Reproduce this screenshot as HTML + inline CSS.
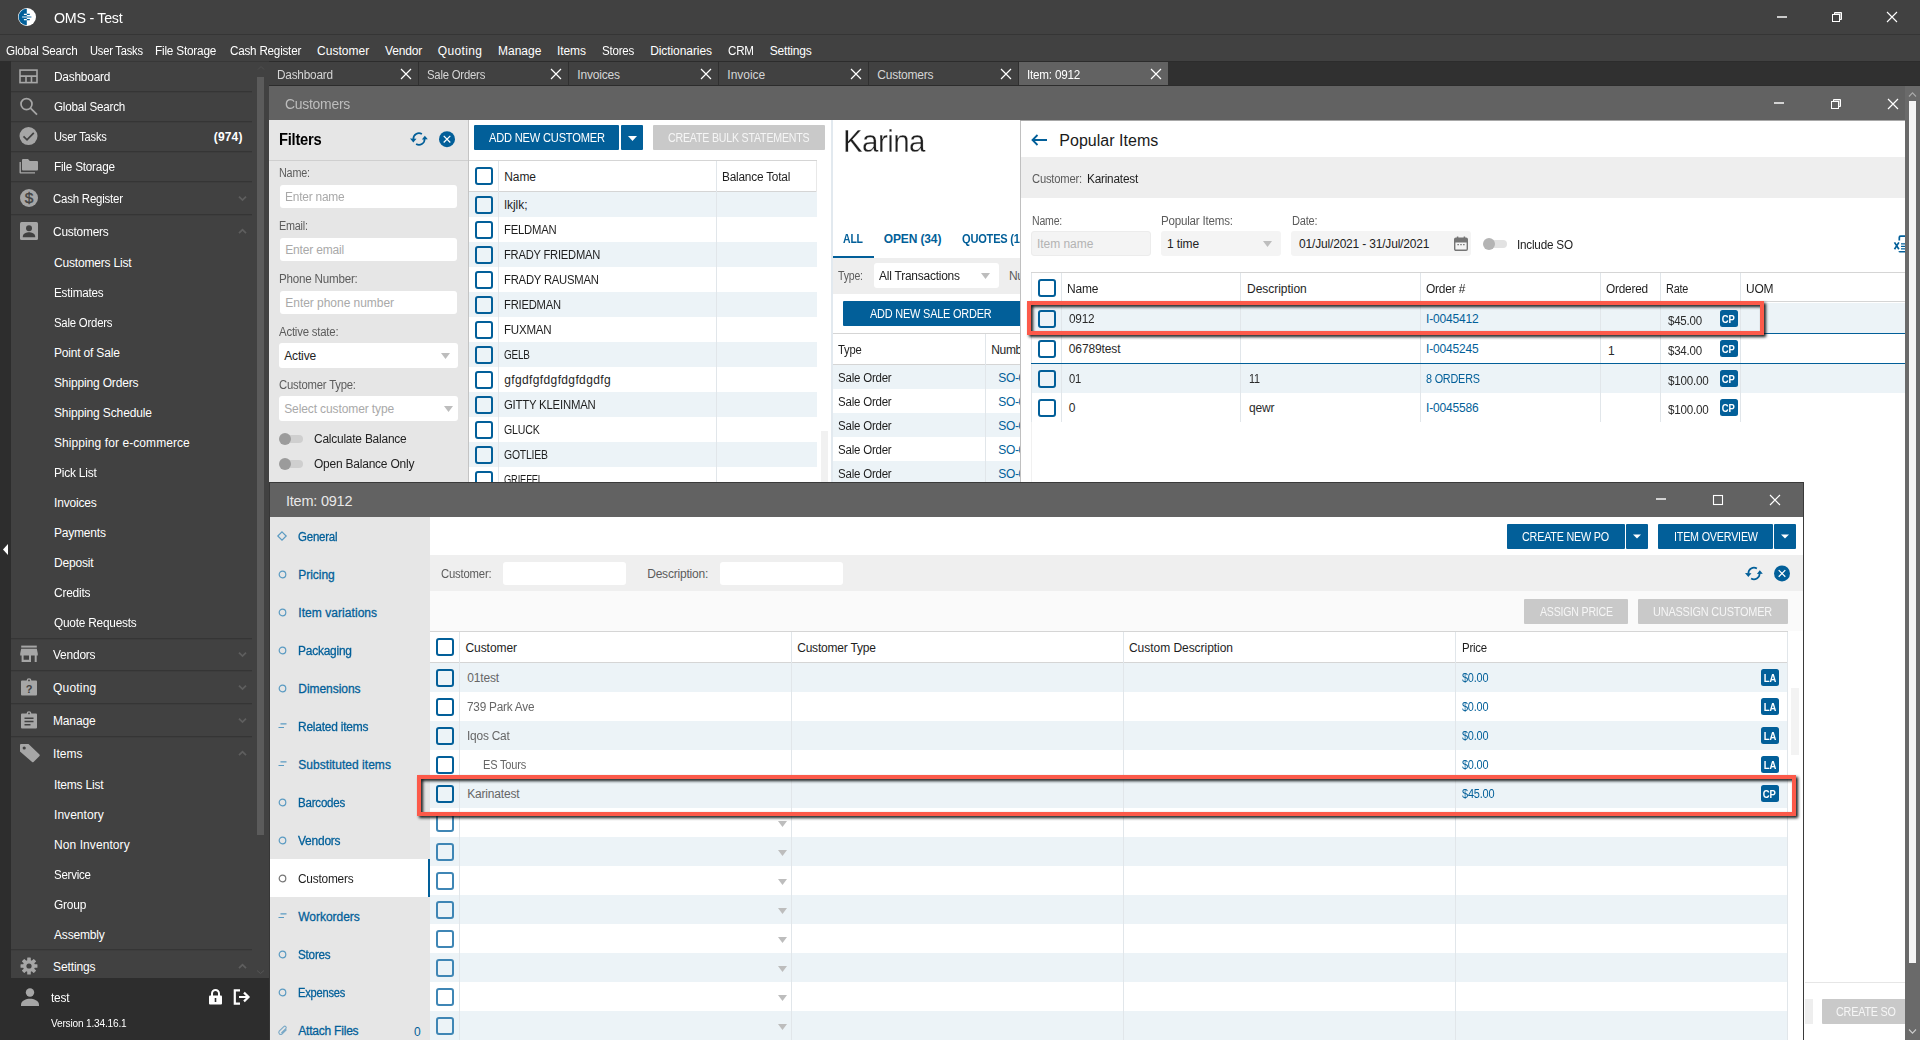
<!DOCTYPE html><html><head><meta charset="utf-8"><title>OMS - Test</title><style>
*{box-sizing:border-box;margin:0;padding:0}
html,body{width:1920px;height:1040px;overflow:hidden;background:#414141}
body{font-family:"Liberation Sans",sans-serif;font-size:12px;color:#fff;position:relative;letter-spacing:-0.35px}
.a{position:absolute}
.t{position:absolute;white-space:nowrap;line-height:16px}
svg{position:absolute;overflow:visible}
.cb{position:absolute;width:18px;height:18px;border:2px solid #025f99;border-radius:3px}
.btn{position:absolute;background:#025f99;border-radius:1px}
.btn.d{background:#c9c9c9}
.inp{position:absolute;background:#fff;border-radius:3px}
.badge{position:absolute;width:17.5px;height:17px;background:#025f99;border-radius:2.5px;color:#fff;font-weight:bold;font-size:10.5px;line-height:18px;text-align:center;letter-spacing:0}
.badge span{display:inline-block;transform:scaleX(.9)}
.red{position:absolute;border:4px solid #fc5a4a;filter:drop-shadow(2px 2px 1.4px rgba(8,14,14,.95))}
</style></head><body>
<div class="a" style="left:0px;top:0px;width:1920px;height:34px;background:#414141;"></div>
<div class="a" style="left:0px;top:34px;width:1920px;height:1px;background:#353535;"></div>
<div class="a" style="left:0px;top:35px;width:1920px;height:26px;background:#414141;"></div>
<svg style="left:17px;top:7px" width="19" height="19" viewBox="0 0 19 19"><g transform="translate(0.5 0.5)"><circle cx="9.5" cy="9.5" r="9" fill="#fff"/><path d="M9.3 1.3A8.2 8.2 0 0 0 9.3 17.7Z" fill="#025f99"/><path d="M9.3 6.9h3M9.3 12.1h3" stroke="#025f99" stroke-width="1.2"/><path d="M9.3 9.5h4.6" stroke="#4a8fbb" stroke-width="1.3"/><path d="M6.4 6.9h2.9M6.4 12.1h2.9" stroke="#fff" stroke-width="1.2"/><path d="M4.6 9.5h4.7" stroke="#bcd6e6" stroke-width="1.3"/></g></svg>
<div class="t" style="left:54px;top:9px;font-size:14.5px;letter-spacing:-0.266px;transform:scaleX(0.9835);transform-origin:0 0;line-height:18px">OMS - Test</div>
<svg style="left:1777px;top:16px" width="10" height="2"><rect width="10" height="2" fill="#fff" fill-opacity="0.72"/></svg>
<svg style="left:1832px;top:12px" width="10" height="10" viewBox="0 0 10 10" fill="none" stroke="#fff" stroke-width="1"><path d="M2.5 2.5V0.5H9.5V7.5H7.5V2.5Z" fill="#a6a6a6"/><rect x="0.5" y="2.5" width="7" height="7"/></svg>
<svg style="left:1887px;top:12px" width="10" height="10" stroke="#fff" stroke-width="1.1"><path d="M0 0L10 10M10 0L0 10"/></svg>
<div class="t" style="left:6px;top:43px;letter-spacing:-0.220px;transform:scaleX(0.9767);transform-origin:0 0;">Global Search</div>
<div class="t" style="left:90px;top:43px;letter-spacing:-0.220px;transform:scaleX(0.9274);transform-origin:0 0;">User Tasks</div>
<div class="t" style="left:155px;top:43px;letter-spacing:-0.220px;transform:scaleX(0.9842);transform-origin:0 0;">File Storage</div>
<div class="t" style="left:230px;top:43px;letter-spacing:-0.220px;transform:scaleX(0.9715);transform-origin:0 0;">Cash Register</div>
<div class="t" style="left:317px;top:43px;letter-spacing:0.041px;">Customer</div>
<div class="t" style="left:385px;top:43px;letter-spacing:-0.147px;">Vendor</div>
<div class="t" style="left:437.7px;top:43px;letter-spacing:0.378px;">Quoting</div>
<div class="t" style="left:498px;top:43px;letter-spacing:-0.013px;">Manage</div>
<div class="t" style="left:557px;top:43px;letter-spacing:-0.085px;">Items</div>
<div class="t" style="left:601.7px;top:43px;letter-spacing:-0.220px;transform:scaleX(0.9618);transform-origin:0 0;">Stores</div>
<div class="t" style="left:650.2px;top:43px;letter-spacing:-0.081px;">Dictionaries</div>
<div class="t" style="left:727.9px;top:43px;letter-spacing:-0.220px;transform:scaleX(0.9669);transform-origin:0 0;">CRM</div>
<div class="t" style="left:769.8px;top:43px;letter-spacing:-0.195px;">Settings</div>
<div class="a" style="left:0px;top:61px;width:11px;height:979px;background:#2d2d2d;"></div>
<svg style="left:3px;top:544px" width="5" height="11"><path d="M5 0V11L0 5.5Z" fill="#fff"/></svg>
<div class="a" style="left:11px;top:61px;width:258px;height:979px;background:#414141;"></div>
<div class="a" style="left:11px;top:61px;width:258px;height:1px;background:#373737;"></div>
<div class="a" style="left:257px;top:77px;width:7px;height:758px;background:#5b5b5b;"></div>
<svg style="left:258px;top:66px" width="6" height="4" fill="none" stroke="#4f4f4f" stroke-width="1"><path d="M0 3.5L3 0.5L6 3.5"/></svg>
<svg style="left:257px;top:970px" width="7" height="4" fill="none" stroke="#555" stroke-width="1"><path d="M0 0.5L3.5 3.5L7 0.5"/></svg>
<svg style="left:19px;top:66px" width="20" height="20" viewBox="0 0 20 20" fill="none" stroke="#a6a6a6" stroke-width="1.6"><g transform="translate(0.0 0.6)"><rect x="1" y="3.5" width="17" height="12.5"/><path d="M1 9.5H18M7 9.5V16M12.5 9.5V16"/></g></svg>
<div class="t" style="left:54px;top:69px;letter-spacing:-0.220px;transform:scaleX(0.9904);transform-origin:0 0;">Dashboard</div>
<svg style="left:19px;top:96px" width="20" height="20" viewBox="0 0 20 20" fill="none" stroke="#a6a6a6" stroke-width="1.7"><g transform="translate(0.0 0.6)"><circle cx="7.5" cy="7.5" r="5.5"/><path d="M11.5 11.5L18 18"/></g></svg>
<div class="t" style="left:54px;top:99px;letter-spacing:-0.220px;transform:scaleX(0.9713);transform-origin:0 0;">Global Search</div>
<svg style="left:19px;top:126px" width="20" height="20" viewBox="0 0 20 20"><g transform="translate(0.0 0.6)"><circle cx="9.5" cy="9.5" r="9" fill="#a6a6a6"/><path d="M4.5 9.8L8 13.2L14.8 6.2" fill="none" stroke="#414141" stroke-width="1.7"/></g></svg>
<div class="t" style="left:54px;top:129px;letter-spacing:-0.220px;transform:scaleX(0.9239);transform-origin:0 0;">User Tasks</div>
<svg style="left:19px;top:156px" width="20" height="20" viewBox="0 0 20 20" fill="#a6a6a6"><g transform="translate(0.0 0.6)"><path d="M4 2.5h5l1.8 1.8H18a1 1 0 0 1 1 1V13a1 1 0 0 1-1 1H4a1 1 0 0 1-1-1V3.5a1 1 0 0 1 1-1z"/><path d="M0.5 5.5h1.4V15.6H16v1.4H1.5a1 1 0 0 1-1-1z"/></g></svg>
<div class="t" style="left:54px;top:159px;letter-spacing:-0.220px;transform:scaleX(0.9794);transform-origin:0 0;">File Storage</div>
<svg style="left:19px;top:188px" width="20" height="20" viewBox="0 0 20 20"><circle cx="10" cy="10" r="9" fill="#a6a6a6"/><text x="10" y="15.2" text-anchor="middle" font-family="Liberation Sans, sans-serif" font-size="15.5" fill="#414141" stroke="#414141" stroke-width="0.35" letter-spacing="0">$</text></svg>
<div class="t" style="left:53px;top:191px;letter-spacing:-0.220px;transform:scaleX(0.9537);transform-origin:0 0;">Cash Register</div>
<svg style="left:19px;top:221px" width="20" height="20" viewBox="0 0 20 20"><rect x="1" y="1" width="18" height="18" rx="1.5" fill="#a6a6a6"/><circle cx="10" cy="7.3" r="3" fill="#414141"/><path d="M3.8 15.5c0-3 4-4.2 6.2-4.2s6.2 1.2 6.2 4.2v0.8H3.8z" fill="#414141"/></svg>
<div class="t" style="left:53px;top:224px;letter-spacing:-0.220px;transform:scaleX(0.9919);transform-origin:0 0;">Customers</div>
<svg style="left:19px;top:644px" width="20" height="20" viewBox="0 0 20 20" fill="#a6a6a6"><rect x="2.2" y="1.6" width="15.6" height="2"/><path d="M2.2 4.8h15.6l1 4.6v2h-1.1V18h-2v-6.6H12V18H2.6v-6.6H1.2v-2zM4.6 11.4V15.8h5.4V11.4z"/></svg>
<div class="t" style="left:53px;top:647px;letter-spacing:-0.220px;transform:scaleX(0.9973);transform-origin:0 0;">Vendors</div>
<svg style="left:19px;top:677px" width="20" height="20" viewBox="0 0 20 20"><path d="M3 3.6h4.6a2.4 2.4 0 0 1 4.8 0h4.6a1 1 0 0 1 1 1V17.6a1 1 0 0 1-1 1h-14a1 1 0 0 1-1-1V4.6a1 1 0 0 1 1-1z" fill="#a6a6a6"/><circle cx="10" cy="3.4" r="0.9" fill="#414141"/><text x="10" y="16" text-anchor="middle" font-family="Liberation Sans, sans-serif" font-weight="bold" font-size="11" fill="#414141" letter-spacing="0">?</text></svg>
<div class="t" style="left:53px;top:680px;letter-spacing:0.211px;">Quoting</div>
<svg style="left:19px;top:710px" width="20" height="20" viewBox="0 0 20 20"><path d="M3 3.6h4.6a2.4 2.4 0 0 1 4.8 0h4.6a1 1 0 0 1 1 1V17.6a1 1 0 0 1-1 1h-14a1 1 0 0 1-1-1V4.6a1 1 0 0 1 1-1z" fill="#a6a6a6"/><circle cx="10" cy="3.4" r="0.9" fill="#414141"/><path d="M5.5 8.2h9M5.5 11.5h9M5.5 14.8h6" stroke="#414141" stroke-width="1.5"/></svg>
<div class="t" style="left:53px;top:713px;letter-spacing:-0.153px;">Manage</div>
<svg style="left:19px;top:743px" width="20" height="20" viewBox="0 0 20 20"><path d="M1 2a1 1 0 0 1 1-1h7.5l11 10.5a1 1 0 0 1 0 1.4l-6 6a1 1 0 0 1-1.4 0L1 8.5z" fill="#a6a6a6"/><circle cx="5.2" cy="5" r="1.6" fill="#414141"/></svg>
<div class="t" style="left:53px;top:746px;letter-spacing:0.065px;">Items</div>
<svg style="left:19px;top:956px" width="20" height="20" viewBox="0 0 20 20"><g transform="translate(1 1) scale(0.9)"><g fill="#a6a6a6"><circle cx="10" cy="10" r="6.7"/><rect x="8" y="0.6" width="4" height="5" rx="0.6" transform="rotate(0 10 10)"/><rect x="8" y="0.6" width="4" height="5" rx="0.6" transform="rotate(45 10 10)"/><rect x="8" y="0.6" width="4" height="5" rx="0.6" transform="rotate(90 10 10)"/><rect x="8" y="0.6" width="4" height="5" rx="0.6" transform="rotate(135 10 10)"/><rect x="8" y="0.6" width="4" height="5" rx="0.6" transform="rotate(180 10 10)"/><rect x="8" y="0.6" width="4" height="5" rx="0.6" transform="rotate(225 10 10)"/><rect x="8" y="0.6" width="4" height="5" rx="0.6" transform="rotate(270 10 10)"/><rect x="8" y="0.6" width="4" height="5" rx="0.6" transform="rotate(315 10 10)"/></g><circle cx="10" cy="10" r="2.9" fill="#414141"/></g></svg>
<div class="t" style="left:53px;top:959px;letter-spacing:-0.109px;">Settings</div>
<div class="t" style="left:213.7px;top:129px;font-weight:bold;letter-spacing:0.196px;">(974)</div>
<div class="a" style="left:11px;top:91px;width:241px;height:1px;background:#353535;"></div>
<div class="a" style="left:11px;top:92px;width:241px;height:1px;background:#3d3d3d;"></div>
<div class="a" style="left:11px;top:121px;width:241px;height:1px;background:#353535;"></div>
<div class="a" style="left:11px;top:122px;width:241px;height:1px;background:#3d3d3d;"></div>
<div class="a" style="left:11px;top:151px;width:241px;height:1px;background:#353535;"></div>
<div class="a" style="left:11px;top:152px;width:241px;height:1px;background:#3d3d3d;"></div>
<div class="a" style="left:11px;top:181px;width:241px;height:1px;background:#353535;"></div>
<div class="a" style="left:11px;top:182px;width:241px;height:1px;background:#3d3d3d;"></div>
<div class="a" style="left:11px;top:214px;width:241px;height:1px;background:#353535;"></div>
<div class="a" style="left:11px;top:215px;width:241px;height:1px;background:#3d3d3d;"></div>
<div class="a" style="left:11px;top:638px;width:241px;height:1px;background:#353535;"></div>
<div class="a" style="left:11px;top:639px;width:241px;height:1px;background:#3d3d3d;"></div>
<div class="a" style="left:11px;top:670px;width:241px;height:1px;background:#353535;"></div>
<div class="a" style="left:11px;top:671px;width:241px;height:1px;background:#3d3d3d;"></div>
<div class="a" style="left:11px;top:703px;width:241px;height:1px;background:#353535;"></div>
<div class="a" style="left:11px;top:704px;width:241px;height:1px;background:#3d3d3d;"></div>
<div class="a" style="left:11px;top:736px;width:241px;height:1px;background:#353535;"></div>
<div class="a" style="left:11px;top:737px;width:241px;height:1px;background:#3d3d3d;"></div>
<div class="a" style="left:11px;top:949px;width:241px;height:1px;background:#353535;"></div>
<div class="a" style="left:11px;top:950px;width:241px;height:1px;background:#3d3d3d;"></div>
<svg style="left:238px;top:195px" width="8" height="6" fill="none" stroke="#5e5e5e" stroke-width="1.8"><g transform="translate(0.5 0.5)"><path d="M0.5 1.2L4 4.6L7.5 1.2"/></g></svg>
<svg style="left:238px;top:228px" width="8" height="6" fill="none" stroke="#5e5e5e" stroke-width="1.8"><g transform="translate(0.5 0.5)"><path d="M0.5 4.6L4 1.2L7.5 4.6"/></g></svg>
<svg style="left:238px;top:651px" width="8" height="6" fill="none" stroke="#5e5e5e" stroke-width="1.8"><g transform="translate(0.5 0.5)"><path d="M0.5 1.2L4 4.6L7.5 1.2"/></g></svg>
<svg style="left:238px;top:684px" width="8" height="6" fill="none" stroke="#5e5e5e" stroke-width="1.8"><g transform="translate(0.5 0.5)"><path d="M0.5 1.2L4 4.6L7.5 1.2"/></g></svg>
<svg style="left:238px;top:717px" width="8" height="6" fill="none" stroke="#5e5e5e" stroke-width="1.8"><g transform="translate(0.5 0.5)"><path d="M0.5 1.2L4 4.6L7.5 1.2"/></g></svg>
<svg style="left:238px;top:750px" width="8" height="6" fill="none" stroke="#5e5e5e" stroke-width="1.8"><g transform="translate(0.5 0.5)"><path d="M0.5 4.6L4 1.2L7.5 4.6"/></g></svg>
<svg style="left:238px;top:963px" width="8" height="6" fill="none" stroke="#5e5e5e" stroke-width="1.8"><g transform="translate(0.5 0.5)"><path d="M0.5 4.6L4 1.2L7.5 4.6"/></g></svg>
<div class="t" style="left:54px;top:255px;letter-spacing:-0.179px;">Customers List</div>
<div class="t" style="left:54px;top:285px;letter-spacing:-0.220px;transform:scaleX(0.9740);transform-origin:0 0;">Estimates</div>
<div class="t" style="left:54px;top:315px;letter-spacing:-0.220px;transform:scaleX(0.9462);transform-origin:0 0;">Sale Orders</div>
<div class="t" style="left:54px;top:345px;letter-spacing:-0.187px;">Point of Sale</div>
<div class="t" style="left:54px;top:375px;letter-spacing:-0.151px;">Shipping Orders</div>
<div class="t" style="left:54px;top:405px;letter-spacing:-0.130px;">Shipping Schedule</div>
<div class="t" style="left:54px;top:435px;letter-spacing:0.079px;">Shipping for e-commerce</div>
<div class="t" style="left:54px;top:465px;letter-spacing:-0.220px;transform:scaleX(0.9949);transform-origin:0 0;">Pick List</div>
<div class="t" style="left:54px;top:495px;letter-spacing:-0.189px;">Invoices</div>
<div class="t" style="left:54px;top:525px;letter-spacing:-0.208px;">Payments</div>
<div class="t" style="left:54px;top:555px;letter-spacing:-0.182px;">Deposit</div>
<div class="t" style="left:54px;top:585px;letter-spacing:-0.220px;transform:scaleX(0.9948);transform-origin:0 0;">Credits</div>
<div class="t" style="left:54px;top:615px;letter-spacing:-0.220px;transform:scaleX(0.9861);transform-origin:0 0;">Quote Requests</div>
<div class="t" style="left:54px;top:777px;letter-spacing:-0.183px;">Items List</div>
<div class="t" style="left:54px;top:807px;letter-spacing:0.042px;">Inventory</div>
<div class="t" style="left:54px;top:837px;letter-spacing:0.082px;">Non Inventory</div>
<div class="t" style="left:54px;top:867px;letter-spacing:-0.220px;transform:scaleX(0.9562);transform-origin:0 0;">Service</div>
<div class="t" style="left:54px;top:897px;letter-spacing:-0.220px;transform:scaleX(0.9947);transform-origin:0 0;">Group</div>
<div class="t" style="left:54px;top:927px;letter-spacing:-0.174px;">Assembly</div>
<div class="a" style="left:11px;top:978px;width:258px;height:62px;background:#2d2d2d;"></div>
<svg style="left:20px;top:987px" width="20" height="20" viewBox="0 0 20 20" fill="#a6a6a6"><circle cx="10" cy="5.5" r="4.2"/><path d="M1 18c0-4.6 5.4-6.2 9-6.2s9 1.6 9 6.2v1H1z"/></svg>
<div class="t" style="left:51px;top:990px;letter-spacing:-0.220px;transform:scaleX(0.9902);transform-origin:0 0;">test</div>
<div class="t" style="left:51px;top:1015px;font-size:11px;letter-spacing:-0.202px;transform:scaleX(0.9187);transform-origin:0 0;">Version 1.34.16.1</div>
<svg style="left:208px;top:989px" width="15" height="16" viewBox="0 0 15 16"><path d="M4 7V4.5a3.5 3.5 0 0 1 7 0V7" fill="none" stroke="#fff" stroke-width="2"/><rect x="1" y="6.5" width="13" height="9" rx="1" fill="#fff"/><rect x="6.7" y="9" width="1.6" height="4" fill="#2d2d2d"/></svg>
<svg style="left:233px;top:989px" width="17" height="16" viewBox="0 0 17 16" fill="none" stroke="#fff" stroke-width="2.2"><path d="M7 1.3H1.8V14.7H7"/><path d="M6 8H15.5M11 3.6L15.5 8L11 12.4"/></svg>
<div class="a" style="left:269px;top:61px;width:1651px;height:25px;background:#303030;"></div>
<div class="a" style="left:269px;top:61px;width:1651px;height:1px;background:#2c2c2c;"></div>
<div class="a" style="left:269px;top:85px;width:1651px;height:1px;background:#2c2c2c;"></div>
<div class="a" style="left:269px;top:62px;width:149px;height:23px;background:#414141;"></div>
<div class="t" style="left:277.3px;top:67px;color:#d6d6d6;letter-spacing:-0.220px;transform:scaleX(0.9834);transform-origin:0 0;">Dashboard</div>
<svg style="left:401px;top:69px" width="10" height="10" stroke="#fff" stroke-width="1.2"><path d="M0 0L10 10M10 0L0 10"/></svg>
<div class="a" style="left:419px;top:62px;width:149px;height:23px;background:#414141;"></div>
<div class="t" style="left:427.3px;top:67px;color:#d6d6d6;letter-spacing:-0.220px;transform:scaleX(0.9429);transform-origin:0 0;">Sale Orders</div>
<svg style="left:551px;top:69px" width="10" height="10" stroke="#fff" stroke-width="1.2"><path d="M0 0L10 10M10 0L0 10"/></svg>
<div class="a" style="left:569px;top:62px;width:149px;height:23px;background:#414141;"></div>
<div class="t" style="left:577.3px;top:67px;color:#d6d6d6;letter-spacing:-0.189px;">Invoices</div>
<svg style="left:701px;top:69px" width="10" height="10" stroke="#fff" stroke-width="1.2"><path d="M0 0L10 10M10 0L0 10"/></svg>
<div class="a" style="left:719px;top:62px;width:149px;height:23px;background:#414141;"></div>
<div class="t" style="left:727.3px;top:67px;color:#d6d6d6;letter-spacing:-0.004px;">Invoice</div>
<svg style="left:851px;top:69px" width="10" height="10" stroke="#fff" stroke-width="1.2"><path d="M0 0L10 10M10 0L0 10"/></svg>
<div class="a" style="left:869px;top:62px;width:149px;height:23px;background:#414141;"></div>
<div class="t" style="left:877.3px;top:67px;color:#d6d6d6;letter-spacing:-0.214px;">Customers</div>
<svg style="left:1001px;top:69px" width="10" height="10" stroke="#fff" stroke-width="1.2"><path d="M0 0L10 10M10 0L0 10"/></svg>
<div class="a" style="left:1019px;top:62px;width:149px;height:23px;background:#626262;"></div>
<div class="t" style="left:1027.3px;top:67px;color:#fff;letter-spacing:-0.220px;transform:scaleX(0.9740);transform-origin:0 0;">Item: 0912</div>
<svg style="left:1151px;top:69px" width="10" height="10" stroke="#fff" stroke-width="1.2"><path d="M0 0L10 10M10 0L0 10"/></svg>
<div class="a" style="left:269px;top:86px;width:1636px;height:34px;background:#626262;"></div>
<div class="t" style="left:285.3px;top:95px;color:#bdbdbd;font-size:14.5px;letter-spacing:-0.266px;transform:scaleX(0.9607);transform-origin:0 0;line-height:18px">Customers</div>
<svg style="left:1774px;top:102px" width="10" height="2"><rect width="10" height="2" fill="#fff" fill-opacity="0.72"/></svg>
<svg style="left:1831px;top:99px" width="10" height="10" viewBox="0 0 10 10" fill="none" stroke="#fff" stroke-width="1"><path d="M2.5 2.5V0.5H9.5V7.5H7.5V2.5Z" fill="#a6a6a6"/><rect x="0.5" y="2.5" width="7" height="7"/></svg>
<svg style="left:1888px;top:99px" width="10" height="10" stroke="#fff" stroke-width="1.2"><path d="M0 0L10 10M10 0L0 10"/></svg>
<div class="a" style="left:269px;top:120px;width:1636px;height:920px;background:#fff;"></div>
<div class="a" style="left:269px;top:120px;width:199px;height:365px;background:#e6e6e6;"></div>
<div class="a" style="left:468px;top:120px;width:1px;height:365px;background:#c4c4c4;"></div>
<div class="a" style="left:269px;top:160px;width:199px;height:1px;background:#cfcfcf;"></div>
<div class="t" style="left:279.4px;top:130px;color:#000;font-size:16px;font-weight:bold;letter-spacing:-0.293px;transform:scaleX(0.9210);transform-origin:0 0;line-height:20px">Filters</div>
<svg style="left:410px;top:130px" width="18" height="17" viewBox="0 0 18 17" fill="none" stroke="#025f99" stroke-width="1.7"><g transform="translate(0.0 0.5)"><path d="M11.9 3.5A5.6 5.6 0 0 0 3.4 8.6"/><path d="M6.1 13.5A5.6 5.6 0 0 0 14.6 8.4"/><path d="M0 8.1L6.5 8.3L3.3 12z" fill="#025f99" stroke="none"/><path d="M11.9 8.9L17.8 8.7L14.8 5.2z" fill="#025f99" stroke="none"/></g></svg>
<svg style="left:439px;top:131px" width="16" height="16" viewBox="0 0 16 16"><g transform="translate(0.0 0.2)"><circle cx="8" cy="8" r="8" fill="#025f99"/><path d="M4.7 4.7L11.3 11.3M11.3 4.7L4.7 11.3" stroke="#fff" stroke-width="1.25"/></g></svg>
<div class="t" style="left:279.4px;top:165px;color:#5c5c5c;letter-spacing:-0.220px;transform:scaleX(0.8995);transform-origin:0 0;">Name:</div>
<div class="inp" style="left:280px;top:185px;width:177px;height:23px;background:#fff;"></div>
<div class="t" style="left:285.3px;top:189px;color:#a9a9a9;letter-spacing:-0.220px;transform:scaleX(0.9941);transform-origin:0 0;">Enter name</div>
<div class="t" style="left:279.4px;top:218px;color:#5c5c5c;letter-spacing:-0.220px;transform:scaleX(0.8995);transform-origin:0 0;">Email:</div>
<div class="inp" style="left:280px;top:238px;width:177px;height:23px;background:#fff;"></div>
<div class="t" style="left:285.3px;top:242px;color:#a9a9a9;letter-spacing:-0.189px;">Enter email</div>
<div class="t" style="left:279.4px;top:271px;color:#5c5c5c;letter-spacing:-0.220px;transform:scaleX(0.9679);transform-origin:0 0;">Phone Number:</div>
<div class="inp" style="left:280px;top:291px;width:177px;height:23px;background:#fff;"></div>
<div class="t" style="left:285.3px;top:295px;color:#a9a9a9;letter-spacing:-0.036px;">Enter phone number</div>
<div class="t" style="left:279.4px;top:324px;color:#5c5c5c;letter-spacing:-0.220px;transform:scaleX(0.9502);transform-origin:0 0;">Active state:</div>
<div class="inp" style="left:279px;top:343px;width:179px;height:25px;background:#fff;"></div>
<div class="t" style="left:284.2px;top:348px;color:#222;letter-spacing:-0.136px;">Active</div>
<svg style="left:441px;top:353px" width="9" height="6"><path d="M0 0H9L4.5 6Z" fill="#bdbdbd"/></svg>
<div class="t" style="left:279.4px;top:377px;color:#5c5c5c;letter-spacing:-0.220px;transform:scaleX(0.9433);transform-origin:0 0;">Customer Type:</div>
<div class="inp" style="left:279px;top:396px;width:179px;height:25px;background:#fff;"></div>
<div class="t" style="left:284.2px;top:401px;color:#a9a9a9;letter-spacing:-0.108px;">Select customer type</div>
<svg style="left:444px;top:406px" width="9" height="6"><path d="M0 0H9L4.5 6Z" fill="#bdbdbd"/></svg>
<div class="a" style="left:282px;top:434.5px;width:21px;height:8px;border-radius:4px;background:#cfcfcf"></div><div class="a" style="left:279px;top:432.5px;width:12px;height:12px;border-radius:6px;background:#9b9b9b"></div>
<div class="t" style="left:313.5px;top:431px;color:#222;letter-spacing:-0.220px;transform:scaleX(0.9945);transform-origin:0 0;">Calculate Balance</div>
<div class="a" style="left:282px;top:459.5px;width:21px;height:8px;border-radius:4px;background:#cfcfcf"></div><div class="a" style="left:279px;top:457.5px;width:12px;height:12px;border-radius:6px;background:#9b9b9b"></div>
<div class="t" style="left:313.5px;top:456px;color:#222;letter-spacing:-0.220px;transform:scaleX(0.9985);transform-origin:0 0;">Open Balance Only</div>
<div class="btn" style="left:474px;top:125px;width:145px;height:25px"></div>
<div class="t" style="left:489px;top:130px;color:#fff;letter-spacing:-0.220px;transform:scaleX(0.9269);transform-origin:0 0;">ADD NEW CUSTOMER</div>
<div class="btn" style="left:621px;top:125px;width:22px;height:25px"></div>
<svg style="left:628px;top:136px" width="9" height="5"><path d="M0 0H9L4.5 5Z" fill="#fff"/></svg>
<div class="btn d" style="left:653px;top:125px;width:172px;height:25px"></div>
<div class="t" style="left:668.3px;top:130px;color:#f6f6f6;letter-spacing:-0.220px;transform:scaleX(0.8852);transform-origin:0 0;">CREATE BULK STATEMENTS</div>
<div class="a" style="left:469px;top:160px;width:348px;height:1px;background:#d5d5d5;"></div>
<div class="a" style="left:469px;top:191px;width:348px;height:1px;background:#d5d5d5;"></div>
<div class="a" style="left:469px;top:192px;width:348px;height:25px;background:#ecf3f7;"></div>
<div class="a" style="left:469px;top:242px;width:348px;height:25px;background:#ecf3f7;"></div>
<div class="a" style="left:469px;top:292px;width:348px;height:25px;background:#ecf3f7;"></div>
<div class="a" style="left:469px;top:342px;width:348px;height:25px;background:#ecf3f7;"></div>
<div class="a" style="left:469px;top:392px;width:348px;height:25px;background:#ecf3f7;"></div>
<div class="a" style="left:469px;top:442px;width:348px;height:25px;background:#ecf3f7;"></div>
<div class="a" style="left:498px;top:161px;width:1px;height:324px;background:#e1e6ea;"></div>
<div class="a" style="left:716px;top:161px;width:1px;height:324px;background:#e1e6ea;"></div>
<div class="a" style="left:816px;top:161px;width:1px;height:31px;background:#e8e8e8;"></div>
<div class="cb" style="left:475px;top:167px;border-color:#025f99"></div>
<div class="t" style="left:504.3px;top:169px;color:#1e1e1e;letter-spacing:-0.104px;">Name</div>
<div class="t" style="left:722.3px;top:169px;color:#1e1e1e;letter-spacing:-0.220px;transform:scaleX(0.9871);transform-origin:0 0;">Balance Total</div>
<div class="cb" style="left:475px;top:196px;border-color:#025f99"></div>
<div class="t" style="left:504.3px;top:197px;color:#1e1e1e;letter-spacing:-0.007px;">lkjlk;</div>
<div class="cb" style="left:475px;top:221px;border-color:#025f99"></div>
<div class="t" style="left:504.3px;top:222px;color:#1e1e1e;letter-spacing:-0.220px;transform:scaleX(0.9407);transform-origin:0 0;">FELDMAN</div>
<div class="cb" style="left:475px;top:246px;border-color:#025f99"></div>
<div class="t" style="left:504.3px;top:247px;color:#1e1e1e;letter-spacing:-0.220px;transform:scaleX(0.9296);transform-origin:0 0;">FRADY FRIEDMAN</div>
<div class="cb" style="left:475px;top:271px;border-color:#025f99"></div>
<div class="t" style="left:504.3px;top:272px;color:#1e1e1e;letter-spacing:-0.220px;transform:scaleX(0.9391);transform-origin:0 0;">FRADY RAUSMAN</div>
<div class="cb" style="left:475px;top:296px;border-color:#025f99"></div>
<div class="t" style="left:504.3px;top:297px;color:#1e1e1e;letter-spacing:-0.220px;transform:scaleX(0.9325);transform-origin:0 0;">FRIEDMAN</div>
<div class="cb" style="left:475px;top:321px;border-color:#025f99"></div>
<div class="t" style="left:504.3px;top:322px;color:#1e1e1e;letter-spacing:-0.220px;transform:scaleX(0.9623);transform-origin:0 0;">FUXMAN</div>
<div class="cb" style="left:475px;top:346px;border-color:#025f99"></div>
<div class="t" style="left:504.3px;top:347px;color:#1e1e1e;letter-spacing:-0.220px;transform:scaleX(0.8292);transform-origin:0 0;">GELB</div>
<div class="cb" style="left:475px;top:371px;border-color:#025f99"></div>
<div class="t" style="left:504.3px;top:372px;color:#1e1e1e;letter-spacing:0.365px;">gfgdfgfdgfdgfdgdfg</div>
<div class="cb" style="left:475px;top:396px;border-color:#025f99"></div>
<div class="t" style="left:504.3px;top:397px;color:#1e1e1e;letter-spacing:-0.220px;transform:scaleX(0.9459);transform-origin:0 0;">GITTY KLEINMAN</div>
<div class="cb" style="left:475px;top:421px;border-color:#025f99"></div>
<div class="t" style="left:504.3px;top:422px;color:#1e1e1e;letter-spacing:-0.220px;transform:scaleX(0.8822);transform-origin:0 0;">GLUCK</div>
<div class="cb" style="left:475px;top:446px;border-color:#025f99"></div>
<div class="t" style="left:504.3px;top:447px;color:#1e1e1e;letter-spacing:-0.220px;transform:scaleX(0.8679);transform-origin:0 0;">GOTLIEB</div>
<div class="cb" style="left:475px;top:471px;border-color:#025f99"></div>
<div class="t" style="left:504.3px;top:472px;color:#1e1e1e;letter-spacing:-0.220px;transform:scaleX(0.7796);transform-origin:0 0;">GRIEFEL</div>
<div class="a" style="left:821px;top:431px;width:7px;height:54px;background:#f1f1f1;"></div>
<div class="a" style="left:831px;top:120px;width:2px;height:365px;background:#e2e9ef;"></div>
<div class="t" style="left:843.3px;top:123px;color:#1e1e1e;font-size:31px;letter-spacing:-0.568px;transform:scaleX(0.9508);transform-origin:0 0;line-height:38px;-webkit-text-stroke:0.3px #fff">Karina</div>
<div class="t" style="left:843px;top:231px;color:#025f99;font-weight:bold;letter-spacing:-0.220px;transform:scaleX(0.8738);transform-origin:0 0;">ALL</div>
<div class="t" style="left:883.7px;top:231px;color:#025f99;font-weight:bold;letter-spacing:-0.123px;">OPEN (34)</div>
<div class="t" style="left:962px;top:231px;color:#025f99;font-weight:bold;letter-spacing:-0.220px;transform:scaleX(0.9218);transform-origin:0 0;">QUOTES (1</div>
<div class="a" style="left:833px;top:256px;width:41px;height:2px;background:#025f99;"></div>
<div class="a" style="left:833px;top:258px;width:187px;height:36px;background:#eeeeee;"></div>
<div class="t" style="left:838.3px;top:268px;color:#5c5c5c;letter-spacing:-0.220px;transform:scaleX(0.8781);transform-origin:0 0;">Type:</div>
<div class="inp" style="left:874px;top:263px;width:125px;height:25px;background:#fff;"></div>
<div class="t" style="left:879px;top:268px;color:#222;letter-spacing:-0.220px;transform:scaleX(0.9950);transform-origin:0 0;">All Transactions</div>
<svg style="left:981px;top:273px" width="9" height="6"><path d="M0 0H9L4.5 6Z" fill="#bdbdbd"/></svg>
<div class="t" style="left:1009px;top:268px;color:#5c5c5c;">Nu</div>
<div class="btn" style="left:843px;top:301px;width:180px;height:25px"></div>
<div class="t" style="left:870.3px;top:306px;color:#fff;letter-spacing:-0.220px;transform:scaleX(0.9108);transform-origin:0 0;">ADD NEW SALE ORDER</div>
<div class="a" style="left:833px;top:333px;width:187px;height:1px;background:#d5d5d5;"></div>
<div class="a" style="left:833px;top:364px;width:187px;height:1px;background:#d5d5d5;"></div>
<div class="a" style="left:833px;top:365px;width:187px;height:24px;background:#ecf3f7;"></div>
<div class="t" style="left:838.3px;top:370px;color:#1e1e1e;letter-spacing:-0.220px;transform:scaleX(0.9581);transform-origin:0 0;">Sale Order</div>
<div class="t" style="left:998.3px;top:370px;color:#025f99;">SO-0</div>
<div class="t" style="left:838.3px;top:394px;color:#1e1e1e;letter-spacing:-0.220px;transform:scaleX(0.9581);transform-origin:0 0;">Sale Order</div>
<div class="t" style="left:998.3px;top:394px;color:#025f99;">SO-0</div>
<div class="a" style="left:833px;top:413px;width:187px;height:24px;background:#ecf3f7;"></div>
<div class="t" style="left:838.3px;top:418px;color:#1e1e1e;letter-spacing:-0.220px;transform:scaleX(0.9581);transform-origin:0 0;">Sale Order</div>
<div class="t" style="left:998.3px;top:418px;color:#025f99;">SO-0</div>
<div class="t" style="left:838.3px;top:442px;color:#1e1e1e;letter-spacing:-0.220px;transform:scaleX(0.9581);transform-origin:0 0;">Sale Order</div>
<div class="t" style="left:998.3px;top:442px;color:#025f99;">SO-0</div>
<div class="a" style="left:833px;top:461px;width:187px;height:24px;background:#ecf3f7;"></div>
<div class="t" style="left:838.3px;top:466px;color:#1e1e1e;letter-spacing:-0.220px;transform:scaleX(0.9581);transform-origin:0 0;">Sale Order</div>
<div class="t" style="left:998.3px;top:466px;color:#025f99;">SO-0</div>
<div class="a" style="left:985px;top:334px;width:1px;height:151px;background:#e1e6ea;"></div>
<div class="t" style="left:838.3px;top:342px;color:#1e1e1e;letter-spacing:-0.220px;transform:scaleX(0.9346);transform-origin:0 0;">Type</div>
<div class="t" style="left:991.3px;top:342px;color:#1e1e1e;">Number</div>
<div class="a" style="left:1020px;top:120px;width:885px;height:365px;background:#fff;"></div>
<div class="a" style="left:1020px;top:120px;width:1px;height:365px;background:#c0c0c0;"></div>
<div class="a" style="left:1020px;top:120px;width:885px;height:1px;background:#a8a8a8;"></div>
<svg style="left:1031px;top:134px" width="16" height="12" viewBox="0 0 16 12" fill="none" stroke="#025f99" stroke-width="1.8"><path d="M16 6H1.5M6.5 1L1.5 6L6.5 11"/></svg>
<div class="t" style="left:1059.3px;top:131px;color:#1a1a1a;font-size:16px;letter-spacing:0.024px;line-height:20px">Popular Items</div>
<div class="a" style="left:1021px;top:157px;width:884px;height:41px;background:#eeeeee;"></div>
<div class="t" style="left:1031.8px;top:171px;color:#5c5c5c;letter-spacing:-0.220px;transform:scaleX(0.9367);transform-origin:0 0;">Customer:</div>
<div class="t" style="left:1087.3px;top:171px;color:#1e1e1e;letter-spacing:-0.220px;transform:scaleX(0.9836);transform-origin:0 0;">Karinatest</div>
<div class="t" style="left:1031.8px;top:213px;color:#5c5c5c;letter-spacing:-0.220px;transform:scaleX(0.8791);transform-origin:0 0;">Name:</div>
<div class="t" style="left:1161.2px;top:213px;color:#5c5c5c;letter-spacing:-0.220px;transform:scaleX(0.9663);transform-origin:0 0;">Popular Items:</div>
<div class="t" style="left:1291.5px;top:213px;color:#5c5c5c;letter-spacing:-0.220px;transform:scaleX(0.9207);transform-origin:0 0;">Date:</div>
<div class="inp" style="left:1031px;top:231px;width:120px;height:25px;background:#f4f4f4;border:1px solid #ececec"></div>
<div class="t" style="left:1037px;top:236px;color:#b3b3b3;letter-spacing:-0.037px;">Item name</div>
<div class="inp" style="left:1161px;top:231px;width:120px;height:25px;background:#f4f4f4;"></div>
<div class="t" style="left:1166.9px;top:236px;color:#222;letter-spacing:-0.096px;">1 time</div>
<svg style="left:1263px;top:241px" width="9" height="6"><path d="M0 0H9L4.5 6Z" fill="#bdbdbd"/></svg>
<div class="inp" style="left:1291px;top:231px;width:180px;height:25px;background:#f4f4f4;"></div>
<div class="t" style="left:1299.1px;top:236px;color:#222;letter-spacing:-0.186px;">01/Jul/2021 - 31/Jul/2021</div>
<svg style="left:1454px;top:236px" width="14" height="15" viewBox="0 0 14 15"><rect x="0.7" y="2.2" width="12.6" height="12.1" rx="1.2" fill="none" stroke="#757575" stroke-width="1.4"/><path d="M0.7 3.2a1 1 0 0 1 1-1h10.6a1 1 0 0 1 1 1V6.4H0.7z" fill="#757575"/><path d="M3.6 0.6V3M10.4 0.6V3" stroke="#757575" stroke-width="1.5"/><path d="M3.4 8.6h1.5M6.25 8.6h1.5M9.1 8.6h1.5" stroke="#757575" stroke-width="1.3"/></svg>
<div class="a" style="left:1486px;top:240.4px;width:21px;height:8px;border-radius:4px;background:#e2e2e2"></div><div class="a" style="left:1483px;top:238.4px;width:12px;height:12px;border-radius:6px;background:#b4b4b4"></div>
<div class="t" style="left:1517.1px;top:237px;color:#222;letter-spacing:-0.220px;transform:scaleX(0.9758);transform-origin:0 0;">Include SO</div>
<svg style="left:1893px;top:235px" width="12" height="18" viewBox="0 0 12 18" fill="none" stroke="#025f99"><path d="M12 1.1H7.6a1.3 1.3 0 0 0-1.3 1.3V5.6" stroke-width="1.7"/><path d="M6 16.2a1 1 0 0 0 1 .6H12" stroke-width="1.6"/><path d="M1.5 7.4L5.9 14.3M5.9 7.4L1.5 14.3" stroke-width="1.7"/><path d="M8 8.8H12M8 11.3H12M8 13.8H12" stroke-width="1.3"/></svg>
<div class="a" style="left:1031px;top:272px;width:874px;height:1px;background:#d5d5d5;"></div>
<div class="a" style="left:1031px;top:301px;width:874px;height:1px;background:#d5d5d5;"></div>
<div class="a" style="left:1031px;top:303px;width:874px;height:30px;background:#ecf3f7;"></div>
<div class="a" style="left:1031px;top:364px;width:874px;height:29px;background:#ecf3f7;"></div>
<div class="a" style="left:1031px;top:273px;width:1px;height:149px;background:#e1e6ea;"></div>
<div class="a" style="left:1061px;top:273px;width:1px;height:149px;background:#e1e6ea;"></div>
<div class="a" style="left:1240px;top:273px;width:1px;height:149px;background:#e1e6ea;"></div>
<div class="a" style="left:1420px;top:273px;width:1px;height:149px;background:#e1e6ea;"></div>
<div class="a" style="left:1600px;top:273px;width:1px;height:149px;background:#e1e6ea;"></div>
<div class="a" style="left:1660px;top:273px;width:1px;height:149px;background:#e1e6ea;"></div>
<div class="a" style="left:1740px;top:273px;width:1px;height:149px;background:#e1e6ea;"></div>
<div class="a" style="left:1031px;top:333px;width:874px;height:1px;background:#025f99;"></div>
<div class="a" style="left:1031px;top:363px;width:874px;height:1px;background:#025f99;"></div>
<div class="a" style="left:1031px;top:422px;width:1px;height:60px;background:#f1f1f1;"></div>
<div class="cb" style="left:1038px;top:279px;border-color:#025f99"></div>
<div class="t" style="left:1067.3px;top:281px;color:#1e1e1e;letter-spacing:-0.220px;transform:scaleX(0.9984);transform-origin:0 0;">Name</div>
<div class="t" style="left:1247px;top:281px;color:#1e1e1e;letter-spacing:-0.033px;">Description</div>
<div class="t" style="left:1426.1px;top:281px;color:#1e1e1e;letter-spacing:-0.220px;transform:scaleX(0.9984);transform-origin:0 0;">Order #</div>
<div class="t" style="left:1606.2px;top:281px;color:#1e1e1e;letter-spacing:-0.220px;transform:scaleX(0.9882);transform-origin:0 0;">Ordered</div>
<div class="t" style="left:1666.4px;top:281px;color:#1e1e1e;letter-spacing:-0.220px;transform:scaleX(0.9032);transform-origin:0 0;">Rate</div>
<div class="t" style="left:1746px;top:281px;color:#1e1e1e;letter-spacing:-0.220px;transform:scaleX(0.9979);transform-origin:0 0;">UOM</div>
<div class="cb" style="left:1038px;top:310px;border-color:#025f99"></div>
<div class="t" style="left:1068.8px;top:311px;color:#2a2a2a;letter-spacing:-0.220px;transform:scaleX(0.9832);transform-origin:0 0;">0912</div>
<div class="t" style="left:1426.1px;top:311px;color:#025f99;letter-spacing:-0.181px;">I-0045412</div>
<div class="t" style="left:1667.8px;top:313px;color:#2a2a2a;letter-spacing:-0.220px;transform:scaleX(0.9577);transform-origin:0 0;">$45.00</div>
<div class="badge" style="left:1720px;top:310px"><span>CP</span></div>
<div class="cb" style="left:1038px;top:340px;border-color:#025f99"></div>
<div class="t" style="left:1068.8px;top:341px;color:#2a2a2a;letter-spacing:-0.127px;">06789test</div>
<div class="t" style="left:1426.1px;top:341px;color:#025f99;letter-spacing:-0.181px;">I-0045245</div>
<div class="t" style="left:1608px;top:343px;color:#2a2a2a;">1</div>
<div class="t" style="left:1667.8px;top:343px;color:#2a2a2a;letter-spacing:-0.220px;transform:scaleX(0.9577);transform-origin:0 0;">$34.00</div>
<div class="badge" style="left:1720px;top:340px"><span>CP</span></div>
<div class="cb" style="left:1038px;top:370px;border-color:#025f99"></div>
<div class="t" style="left:1068.8px;top:371px;color:#2a2a2a;letter-spacing:-0.220px;transform:scaleX(0.9369);transform-origin:0 0;">01</div>
<div class="t" style="left:1248.9px;top:371px;color:#2a2a2a;letter-spacing:-0.220px;transform:scaleX(0.8989);transform-origin:0 0;">11</div>
<div class="t" style="left:1426.1px;top:371px;color:#025f99;letter-spacing:-0.220px;transform:scaleX(0.9029);transform-origin:0 0;">8 ORDERS</div>
<div class="t" style="left:1667.8px;top:373px;color:#2a2a2a;letter-spacing:-0.220px;transform:scaleX(0.9701);transform-origin:0 0;">$100.00</div>
<div class="badge" style="left:1720px;top:370px"><span>CP</span></div>
<div class="cb" style="left:1038px;top:399px;border-color:#025f99"></div>
<div class="t" style="left:1068.8px;top:400px;color:#2a2a2a;">0</div>
<div class="t" style="left:1248.9px;top:400px;color:#2a2a2a;letter-spacing:-0.137px;">qewr</div>
<div class="t" style="left:1426.1px;top:400px;color:#025f99;letter-spacing:-0.181px;">I-0045586</div>
<div class="t" style="left:1667.8px;top:402px;color:#2a2a2a;letter-spacing:-0.220px;transform:scaleX(0.9701);transform-origin:0 0;">$100.00</div>
<div class="badge" style="left:1720px;top:399px"><span>CP</span></div>
<div class="red" style="left:1027px;top:301px;width:737px;height:34px"></div>
<div class="a" style="left:1805px;top:982px;width:100px;height:1px;background:#e6e6e6;"></div>
<div class="a" style="left:1805px;top:999px;width:8px;height:25px;background:#eeeeee;"></div>
<div class="btn d" style="left:1822px;top:999px;width:90px;height:25px"></div>
<div class="t" style="left:1836px;top:1004px;color:#f6f6f6;letter-spacing:-0.220px;transform:scaleX(0.8996);transform-origin:0 0;">CREATE SO</div>
<div class="a" style="left:1905px;top:86px;width:15px;height:954px;background:#6a6a6a;"></div>
<div class="a" style="left:1909px;top:101px;width:7px;height:862px;background:#f5f5f5;"></div>
<svg style="left:1909px;top:92px" width="7" height="5" fill="none" stroke="#aaa" stroke-width="1.1"><path d="M0 4.5L3.5 0.8L7 4.5"/></svg>
<svg style="left:1909px;top:1029px" width="7" height="5" fill="none" stroke="#ccc" stroke-width="1.1"><path d="M0 0.5L3.5 4.2L7 0.5"/></svg>
<div class="a" style="left:269px;top:482px;width:1535px;height:558px;background:#fff;"></div>
<div class="a" style="left:269px;top:482px;width:1535px;height:35px;background:#626262;"></div>
<div class="a" style="left:269px;top:482px;width:1535px;height:1px;background:#3a3a3a;"></div>
<div class="a" style="left:1803px;top:482px;width:1px;height:558px;background:#3a3a3a;"></div>
<div class="a" style="left:269px;top:482px;width:1px;height:558px;background:#363636;"></div>
<div class="t" style="left:286px;top:492px;color:#e8e8e8;font-size:14.5px;letter-spacing:-0.224px;line-height:18px">Item: 0912</div>
<svg style="left:1656px;top:498px" width="10" height="2"><rect width="10" height="2" fill="#fff" fill-opacity="0.72"/></svg>
<svg style="left:1713px;top:495px" width="10" height="10" fill="none" stroke="#fff" stroke-width="1.1"><rect x="0.5" y="0.5" width="9" height="9"/></svg>
<svg style="left:1770px;top:495px" width="10" height="10" stroke="#fff" stroke-width="1.2"><path d="M0 0L10 10M10 0L0 10"/></svg>
<div class="a" style="left:270px;top:517px;width:160px;height:523px;background:#e6e6e6;"></div>
<svg style="left:277px;top:531px" width="10" height="10" fill="none" stroke="#5b9bc2" stroke-width="1.2"><path d="M5 0.8L9.2 5L5 9.2L0.8 5Z"/></svg>
<div class="t" style="left:298.3px;top:529px;color:#025f99;letter-spacing:-0.220px;transform:scaleX(0.9571);transform-origin:0 0;-webkit-text-stroke:0.28px #025f99">General</div>
<svg style="left:278px;top:570px" width="9" height="9" fill="none" stroke="#5b9bc2" stroke-width="1.2"><circle cx="4.5" cy="4.5" r="3.3"/></svg>
<div class="t" style="left:298.3px;top:567px;color:#025f99;letter-spacing:-0.030px;-webkit-text-stroke:0.28px #025f99">Pricing</div>
<svg style="left:278px;top:608px" width="9" height="9" fill="none" stroke="#5b9bc2" stroke-width="1.2"><circle cx="4.5" cy="4.5" r="3.3"/></svg>
<div class="t" style="left:298.3px;top:605px;color:#025f99;letter-spacing:0.055px;-webkit-text-stroke:0.28px #025f99">Item variations</div>
<svg style="left:278px;top:646px" width="9" height="9" fill="none" stroke="#5b9bc2" stroke-width="1.2"><circle cx="4.5" cy="4.5" r="3.3"/></svg>
<div class="t" style="left:298.3px;top:643px;color:#025f99;letter-spacing:-0.220px;transform:scaleX(0.9948);transform-origin:0 0;-webkit-text-stroke:0.28px #025f99">Packaging</div>
<svg style="left:278px;top:684px" width="9" height="9" fill="none" stroke="#5b9bc2" stroke-width="1.2"><circle cx="4.5" cy="4.5" r="3.3"/></svg>
<div class="t" style="left:298.3px;top:681px;color:#025f99;letter-spacing:-0.044px;-webkit-text-stroke:0.28px #025f99">Dimensions</div>
<svg style="left:278px;top:723px" width="9" height="6" fill="none" stroke="#5b9bc2" stroke-width="1.2"><path d="M2.5 0.8H8.5M0.5 4.5H6"/></svg>
<div class="t" style="left:298.3px;top:719px;color:#025f99;letter-spacing:-0.220px;transform:scaleX(0.9968);transform-origin:0 0;-webkit-text-stroke:0.28px #025f99">Related items</div>
<svg style="left:278px;top:761px" width="9" height="6" fill="none" stroke="#5b9bc2" stroke-width="1.2"><path d="M2.5 0.8H8.5M0.5 4.5H6"/></svg>
<div class="t" style="left:298.3px;top:757px;color:#025f99;letter-spacing:0.034px;-webkit-text-stroke:0.28px #025f99">Substituted items</div>
<svg style="left:278px;top:798px" width="9" height="9" fill="none" stroke="#5b9bc2" stroke-width="1.2"><circle cx="4.5" cy="4.5" r="3.3"/></svg>
<div class="t" style="left:298.3px;top:795px;color:#025f99;letter-spacing:-0.220px;transform:scaleX(0.9622);transform-origin:0 0;-webkit-text-stroke:0.28px #025f99">Barcodes</div>
<svg style="left:278px;top:836px" width="9" height="9" fill="none" stroke="#5b9bc2" stroke-width="1.2"><circle cx="4.5" cy="4.5" r="3.3"/></svg>
<div class="t" style="left:298.3px;top:833px;color:#025f99;letter-spacing:-0.220px;transform:scaleX(0.9973);transform-origin:0 0;-webkit-text-stroke:0.28px #025f99">Vendors</div>
<div class="a" style="left:270px;top:859px;width:160px;height:38px;background:#fff;"></div>
<div class="a" style="left:428px;top:859px;width:2px;height:38px;background:#025f99;"></div>
<svg style="left:278px;top:874px" width="9" height="9" fill="none" stroke="#777" stroke-width="1.2"><circle cx="4.5" cy="4.5" r="3.3"/></svg>
<div class="t" style="left:298.3px;top:871px;color:#1e1e1e;letter-spacing:-0.220px;transform:scaleX(0.9883);transform-origin:0 0;">Customers</div>
<svg style="left:278px;top:913px" width="9" height="6" fill="none" stroke="#5b9bc2" stroke-width="1.2"><path d="M2.5 0.8H8.5M0.5 4.5H6"/></svg>
<div class="t" style="left:298.3px;top:909px;color:#025f99;letter-spacing:-0.033px;-webkit-text-stroke:0.28px #025f99">Workorders</div>
<svg style="left:278px;top:950px" width="9" height="9" fill="none" stroke="#5b9bc2" stroke-width="1.2"><circle cx="4.5" cy="4.5" r="3.3"/></svg>
<div class="t" style="left:298.3px;top:947px;color:#025f99;letter-spacing:-0.220px;transform:scaleX(0.9737);transform-origin:0 0;-webkit-text-stroke:0.28px #025f99">Stores</div>
<svg style="left:278px;top:988px" width="9" height="9" fill="none" stroke="#5b9bc2" stroke-width="1.2"><circle cx="4.5" cy="4.5" r="3.3"/></svg>
<div class="t" style="left:298.3px;top:985px;color:#025f99;letter-spacing:-0.220px;transform:scaleX(0.9245);transform-origin:0 0;-webkit-text-stroke:0.28px #025f99">Expenses</div>
<svg style="left:277px;top:1025px" width="11" height="12" viewBox="0 0 11 12" fill="none" stroke="#7aa9c7" stroke-width="1.1"><path d="M9.5 4.5L5 9a2 2 0 0 1-2.8-2.8L6.8 1.6a1.4 1.4 0 0 1 2 2L4.4 8"/></svg>
<div class="t" style="left:298.3px;top:1023px;color:#025f99;letter-spacing:-0.218px;-webkit-text-stroke:0.28px #025f99">Attach Files</div>
<div class="t" style="left:414px;top:1024px;color:#025f99;">0</div>
<div class="btn" style="left:1507px;top:523.5px;width:118px;height:25px"></div>
<div class="t" style="left:1522.4px;top:529px;color:#fff;letter-spacing:-0.220px;transform:scaleX(0.8976);transform-origin:0 0;">CREATE NEW PO</div>
<div class="btn" style="left:1626px;top:523.5px;width:22px;height:25px"></div>
<svg style="left:1633px;top:534px" width="8" height="4"><g transform="translate(0.0 0.5)"><path d="M0 0H8L4.0 4Z" fill="#fff"/></g></svg>
<div class="btn" style="left:1658px;top:523.5px;width:115px;height:25px"></div>
<div class="t" style="left:1673.6px;top:529px;color:#fff;letter-spacing:-0.220px;transform:scaleX(0.8953);transform-origin:0 0;">ITEM OVERVIEW</div>
<div class="btn" style="left:1774px;top:523.5px;width:22px;height:25px"></div>
<svg style="left:1781px;top:534px" width="8" height="4"><g transform="translate(0.0 0.5)"><path d="M0 0H8L4.0 4Z" fill="#fff"/></g></svg>
<div class="a" style="left:430px;top:555px;width:1373px;height:36px;background:#efefef;"></div>
<div class="t" style="left:440.6px;top:566px;color:#5c5c5c;letter-spacing:-0.220px;transform:scaleX(0.9442);transform-origin:0 0;">Customer:</div>
<div class="t" style="left:647.2px;top:566px;color:#5c5c5c;letter-spacing:-0.206px;">Description:</div>
<div class="inp" style="left:503px;top:562px;width:123px;height:23px;background:#fff;"></div>
<div class="inp" style="left:720px;top:562px;width:123px;height:23px;background:#fff;"></div>
<svg style="left:1745px;top:565px" width="18" height="17" viewBox="0 0 18 17" fill="none" stroke="#025f99" stroke-width="1.7"><path d="M11.9 3.5A5.6 5.6 0 0 0 3.4 8.6"/><path d="M6.1 13.5A5.6 5.6 0 0 0 14.6 8.4"/><path d="M0 8.1L6.5 8.3L3.3 12z" fill="#025f99" stroke="none"/><path d="M11.9 8.9L17.8 8.7L14.8 5.2z" fill="#025f99" stroke="none"/></svg>
<svg style="left:1774px;top:565px" width="16" height="16" viewBox="0 0 16 16"><g transform="translate(0.0 0.4)"><circle cx="8" cy="8" r="8" fill="#025f99"/><path d="M4.7 4.7L11.3 11.3M11.3 4.7L4.7 11.3" stroke="#fff" stroke-width="1.25"/></g></svg>
<div class="a" style="left:430px;top:591px;width:1373px;height:40px;background:#fafafa;"></div>
<div class="btn d" style="left:1524px;top:598.5px;width:104px;height:25px"></div>
<div class="t" style="left:1539.5px;top:604px;color:#f6f6f6;letter-spacing:-0.220px;transform:scaleX(0.8814);transform-origin:0 0;">ASSIGN PRICE</div>
<div class="btn d" style="left:1638px;top:598.5px;width:150px;height:25px"></div>
<div class="t" style="left:1653.3px;top:604px;color:#f6f6f6;letter-spacing:-0.220px;transform:scaleX(0.9103);transform-origin:0 0;">UNASSIGN CUSTOMER</div>
<div class="a" style="left:430px;top:631px;width:1358px;height:1px;background:#d5d5d5;"></div>
<div class="a" style="left:430px;top:662px;width:1358px;height:1px;background:#d5d5d5;"></div>
<div class="a" style="left:430px;top:663px;width:1358px;height:29px;background:#ecf3f7;"></div>
<div class="a" style="left:430px;top:721px;width:1358px;height:29px;background:#ecf3f7;"></div>
<div class="a" style="left:430px;top:779px;width:1358px;height:29px;background:#ecf3f7;"></div>
<div class="a" style="left:430px;top:837px;width:1358px;height:29px;background:#ecf3f7;"></div>
<div class="a" style="left:430px;top:895px;width:1358px;height:29px;background:#ecf3f7;"></div>
<div class="a" style="left:430px;top:953px;width:1358px;height:29px;background:#ecf3f7;"></div>
<div class="a" style="left:430px;top:1011px;width:1358px;height:29px;background:#ecf3f7;"></div>
<div class="a" style="left:459px;top:632px;width:1px;height:408px;background:#e1e6ea;"></div>
<div class="a" style="left:791px;top:632px;width:1px;height:408px;background:#e1e6ea;"></div>
<div class="a" style="left:1123px;top:632px;width:1px;height:408px;background:#e1e6ea;"></div>
<div class="a" style="left:1455px;top:632px;width:1px;height:408px;background:#e1e6ea;"></div>
<div class="a" style="left:1787px;top:632px;width:1px;height:408px;background:#e1e6ea;"></div>
<div class="cb" style="left:436px;top:638px;border-color:#025f99"></div>
<div class="t" style="left:465.4px;top:640px;color:#1e1e1e;letter-spacing:-0.045px;">Customer</div>
<div class="t" style="left:797.2px;top:640px;color:#1e1e1e;letter-spacing:-0.204px;">Customer Type</div>
<div class="t" style="left:1129px;top:640px;color:#1e1e1e;letter-spacing:-0.042px;">Custom Description</div>
<div class="t" style="left:1461.5px;top:640px;color:#1e1e1e;letter-spacing:-0.220px;transform:scaleX(0.9524);transform-origin:0 0;">Price</div>
<div class="cb" style="left:436px;top:669px;border-color:#025f99"></div>
<div class="t" style="left:467.2px;top:670px;color:#666;letter-spacing:-0.158px;">01test</div>
<div class="t" style="left:1461.5px;top:670px;color:#025f99;letter-spacing:-0.220px;transform:scaleX(0.9091);transform-origin:0 0;">$0.00</div>
<div class="badge" style="left:1761px;top:669px"><span>LA</span></div>
<div class="cb" style="left:436px;top:698px;border-color:#025f99"></div>
<div class="t" style="left:467.2px;top:699px;color:#666;letter-spacing:-0.220px;transform:scaleX(0.9819);transform-origin:0 0;">739 Park Ave</div>
<div class="t" style="left:1461.5px;top:699px;color:#025f99;letter-spacing:-0.220px;transform:scaleX(0.9091);transform-origin:0 0;">$0.00</div>
<div class="badge" style="left:1761px;top:698px"><span>LA</span></div>
<div class="cb" style="left:436px;top:727px;border-color:#025f99"></div>
<div class="t" style="left:467.2px;top:728px;color:#666;letter-spacing:-0.220px;transform:scaleX(0.9918);transform-origin:0 0;">Iqos Cat</div>
<div class="t" style="left:1461.5px;top:728px;color:#025f99;letter-spacing:-0.220px;transform:scaleX(0.9091);transform-origin:0 0;">$0.00</div>
<div class="badge" style="left:1761px;top:727px"><span>LA</span></div>
<div class="cb" style="left:436px;top:756px;border-color:#025f99"></div>
<div class="t" style="left:483.2px;top:757px;color:#666;letter-spacing:-0.220px;transform:scaleX(0.9205);transform-origin:0 0;">ES Tours</div>
<div class="t" style="left:1461.5px;top:757px;color:#025f99;letter-spacing:-0.220px;transform:scaleX(0.9091);transform-origin:0 0;">$0.00</div>
<div class="badge" style="left:1761px;top:756px"><span>LA</span></div>
<div class="cb" style="left:436px;top:785px;border-color:#025f99"></div>
<div class="t" style="left:467.2px;top:786px;color:#666;letter-spacing:-0.170px;">Karinatest</div>
<div class="t" style="left:1461.5px;top:786px;color:#025f99;letter-spacing:-0.220px;transform:scaleX(0.9128);transform-origin:0 0;">$45.00</div>
<div class="badge" style="left:1761px;top:785px"><span>CP</span></div>
<div class="cb" style="left:436px;top:814px;border-color:#3f86b5"></div>
<svg style="left:778px;top:821px" width="9" height="6"><path d="M0 0H9L4.5 6Z" fill="#bdbdbd"/></svg>
<div class="cb" style="left:436px;top:843px;border-color:#3f86b5"></div>
<svg style="left:778px;top:850px" width="9" height="6"><path d="M0 0H9L4.5 6Z" fill="#bdbdbd"/></svg>
<div class="cb" style="left:436px;top:872px;border-color:#3f86b5"></div>
<svg style="left:778px;top:879px" width="9" height="6"><path d="M0 0H9L4.5 6Z" fill="#bdbdbd"/></svg>
<div class="cb" style="left:436px;top:901px;border-color:#3f86b5"></div>
<svg style="left:778px;top:908px" width="9" height="6"><path d="M0 0H9L4.5 6Z" fill="#bdbdbd"/></svg>
<div class="cb" style="left:436px;top:930px;border-color:#3f86b5"></div>
<svg style="left:778px;top:937px" width="9" height="6"><path d="M0 0H9L4.5 6Z" fill="#bdbdbd"/></svg>
<div class="cb" style="left:436px;top:959px;border-color:#3f86b5"></div>
<svg style="left:778px;top:966px" width="9" height="6"><path d="M0 0H9L4.5 6Z" fill="#bdbdbd"/></svg>
<div class="cb" style="left:436px;top:988px;border-color:#3f86b5"></div>
<svg style="left:778px;top:995px" width="9" height="6"><path d="M0 0H9L4.5 6Z" fill="#bdbdbd"/></svg>
<div class="cb" style="left:436px;top:1017px;border-color:#3f86b5"></div>
<svg style="left:778px;top:1024px" width="9" height="6"><path d="M0 0H9L4.5 6Z" fill="#bdbdbd"/></svg>
<div class="a" style="left:1791px;top:688px;width:8px;height:67px;background:#f3f3f3;"></div>
<div class="red" style="left:417px;top:775px;width:1379px;height:41px"></div>
</body></html>
